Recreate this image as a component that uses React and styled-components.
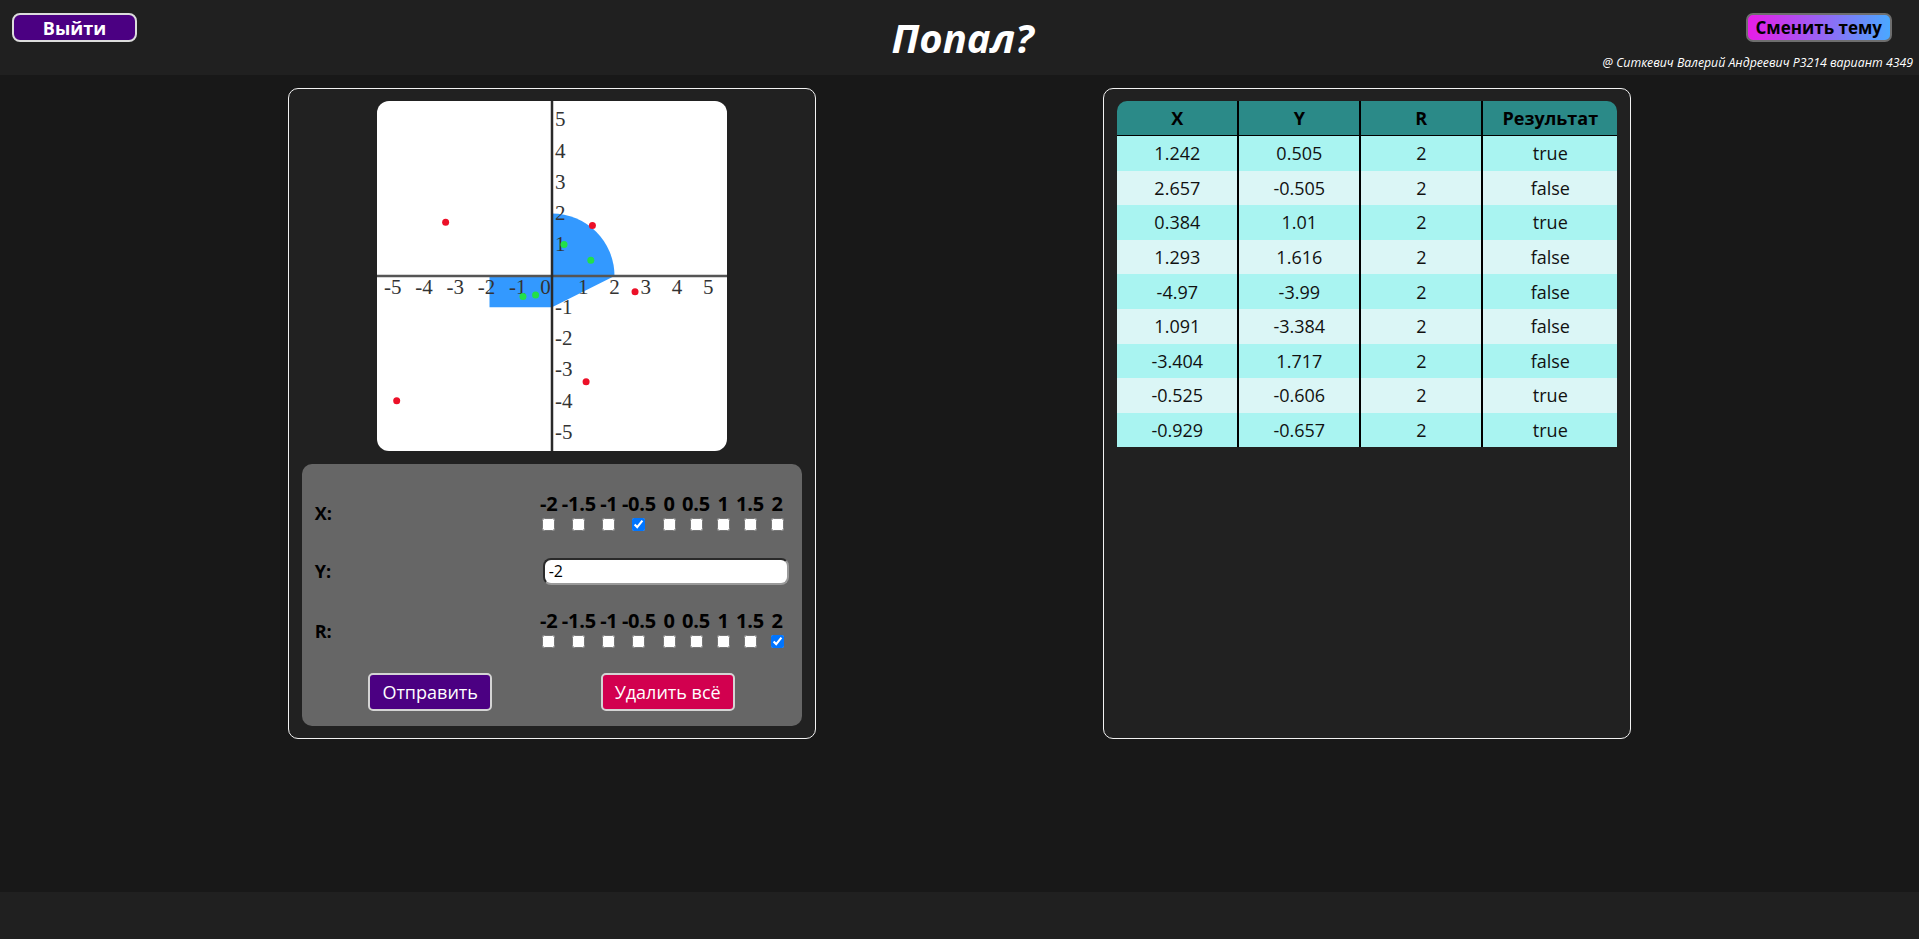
import React from "react";
import styled, { createGlobalStyle } from "styled-components";

const GlobalStyle = createGlobalStyle`
  html, body { margin: 0; padding: 0; height: 100%; }
  body {
    background: #181818;
    font-family: "Open Sans", "Noto Sans", sans-serif;
    color: #fff;
    overflow: hidden;
  }
  #root { height: 100%; }
  * { box-sizing: border-box; }
`;

const Page = styled.div`
  height: 100vh;
  display: flex;
  flex-direction: column;
`;

const Header = styled.header`
  flex: 0 0 75px;
  background: #202020;
  display: grid;
  grid-template-columns: 1fr auto 1fr;
  align-items: start;
  padding: 0 6px 0 12px;
`;

const HeaderLeft = styled.div`
  display: flex;
  padding-top: 13px;
`;

const HeaderRight = styled.div`
  display: flex;
  flex-direction: column;
  align-items: flex-end;
  padding-top: 13px;
`;

const LogoutButton = styled.button`
  width: 125px;
  height: 29px;
  background: #4b0082;
  color: #fff;
  border: 2px solid #dcdcdc;
  border-radius: 8px;
  font-family: inherit;
  font-weight: 700;
  font-size: 18px;
  line-height: 1;
  padding: 0;
`;

const Title = styled.h1`
  margin: 18px 0 0;
  font-size: 40px;
  line-height: 40px;
  font-weight: 700;
  font-style: italic;
  color: #fff;
`;

const ThemeButton = styled.button`
  height: 29px;
  padding: 0 8px;
  margin-right: 21px;
  background: linear-gradient(90deg, #e81ce8, #4aa8ff);
  color: #000;
  border: 2px solid #6e6e6e;
  border-radius: 7px;
  font-family: inherit;
  font-weight: 700;
  font-size: 17px;
  line-height: 1;
`;

const Credits = styled.div`
  margin-top: 13px;
  font-size: 12.3px;
  line-height: 16px;
  font-style: italic;
  color: #fff;
  white-space: nowrap;
`;

const Main = styled.main`
  flex: 1;
  display: flex;
  justify-content: space-evenly;
  align-items: flex-start;
  padding-top: 13px;
`;

const Panel = styled.section`
  width: 528px;
  height: 651px;
  border: 1px solid #f2f2f2;
  border-radius: 10px;
  background: #212121;
  padding: 12px 13px;
  display: flex;
  flex-direction: column;
  align-items: center;
`;

const GraphSvg = styled.svg`
  display: block;
  width: 350px;
  height: 350px;
  background: #fff;
  border-radius: 12px;
  flex: none;
`;

const Form = styled.form`
  width: 100%;
  height: 262px;
  margin-top: 13px;
  background: #666666;
  border-radius: 10px;
  padding: 20px 12px 4px 13px;
  display: grid;
  grid-template-columns: 224px 1fr;
  grid-template-rows: 58px 58px 61px 61px;
  color: #000;
`;

const FieldLabel = styled.div`
  display: flex;
  align-items: center;
  font-weight: 700;
  font-size: 18px;
`;

const Cell = styled.div`
  display: flex;
  align-items: center;
  justify-content: ${(p) => (p.$center ? "center" : "flex-start")};
  padding-left: ${(p) => (p.$center ? "7px" : "0")};
`;

const Options = styled.div`
  display: flex;
  gap: 3px;
`;

const Option = styled.label`
  min-width: 20px;
  display: flex;
  flex-direction: column;
  align-items: center;
  font-weight: 700;
  font-size: 20px;
  line-height: 22px;
  letter-spacing: -0.2px;
  white-space: nowrap;
`;

const Check = styled.input`
  width: 13px;
  height: 13px;
  margin: 3px 0;
`;

const TextInput = styled.input`
  width: 246px;
  height: 27px;
  margin-left: 4px;
  border: 2px solid;
  border-color: #2a2a2a #9a9a9a #9a9a9a #2a2a2a;
  border-radius: 8px;
  background: #fff;
  padding: 0 4px;
  font-family: inherit;
  font-size: 16px;
  color: #000;
  outline: none;
`;

const ActionButton = styled.button`
  height: 38px;
  padding: 0 12px;
  background: ${(p) => p.$bg};
  color: #fff;
  border: 2px solid #d4d4d4;
  border-radius: 5px;
  font-family: inherit;
  font-size: 18px;
  line-height: 1;
`;

const Table = styled.table`
  width: 500px;
  border-collapse: separate;
  border-spacing: 0;
  table-layout: fixed;
  color: #111;
  font-size: 18px;
`;

const Th = styled.th`
  height: 35px;
  padding: 0;
  background: #2b8a88;
  color: #000;
  font-weight: 700;
  border-bottom: 1px solid #000;
  border-left: ${(p) => (p.$first ? "none" : "2px solid #000")};
  &:first-child { border-top-left-radius: 10px; }
  &:last-child { border-top-right-radius: 10px; }
`;

const Tr = styled.tr`
  background: ${(p) => (p.$odd ? "#a9f4f1" : "#dbf6f6")};
`;

const Td = styled.td`
  height: 34.6px;
  padding: 0;
  text-align: center;
  vertical-align: middle;
  border-left: ${(p) => (p.$first ? "none" : "2px solid #000")};
`;

const Footer = styled.footer`
  flex: 0 0 47px;
  background: #202020;
`;

const VALUES = ["-2", "-1.5", "-1", "-0.5", "0", "0.5", "1", "1.5", "2"];

const ROWS = [
  ["1.242", "0.505", "2", "true"],
  ["2.657", "-0.505", "2", "false"],
  ["0.384", "1.01", "2", "true"],
  ["1.293", "1.616", "2", "false"],
  ["-4.97", "-3.99", "2", "false"],
  ["1.091", "-3.384", "2", "false"],
  ["-3.404", "1.717", "2", "false"],
  ["-0.525", "-0.606", "2", "true"],
  ["-0.929", "-0.657", "2", "true"],
];

const U = 31.25;
const C = 175;
const px = (v) => C + v * U;
const py = (v) => C - v * U;
const TICKS = [-5, -4, -3, -2, -1, 1, 2, 3, 4, 5];
const BLUE = "#3399ff";

function Graph() {
  return (
    <GraphSvg viewBox="0 0 350 350">
      <path
        d={`M${C},${C} L${C},${py(2)} A${2 * U},${2 * U} 0 0 1 ${px(2)},${C} Z`}
        fill={BLUE}
      />
      <rect x={px(-2)} y={C} width={2 * U} height={U} fill={BLUE} />
      <polygon points={`${C},${C} ${px(2)},${C} ${C},${py(-1)}`} fill={BLUE} />
      <line x1="0" y1={C} x2="350" y2={C} stroke="#555" strokeWidth="2.5" />
      <line x1={C} y1="0" x2={C} y2="350" stroke="#2a2a2a" strokeWidth="2.5" />
      <g fontFamily='"Liberation Serif", "DejaVu Serif", serif' fontSize="21" fill="#333">
        {TICKS.map((k) => (
          <text key={`x${k}`} x={px(k) - (k < 0 ? 3 : 0)} y={193} textAnchor="middle">
            {k}
          </text>
        ))}
        <text x={168.5} y={193} textAnchor="middle">0</text>
        {TICKS.map((k) => (
          <text key={`y${k}`} x={178} y={py(k) + 6.5} textAnchor="start">
            {k}
          </text>
        ))}
      </g>
      {ROWS.map(([x, y, , res], i) => (
        <circle
          key={i}
          cx={px(parseFloat(x))}
          cy={py(parseFloat(y))}
          r="3.5"
          fill={res === "true" ? "#22e04a" : "#ec1028"}
        />
      ))}
    </GraphSvg>
  );
}

function OptionGroup({ checked }) {
  return (
    <Options>
      {VALUES.map((v) => (
        <Option key={v}>
          {v}
          <Check type="checkbox" defaultChecked={v === checked} />
        </Option>
      ))}
    </Options>
  );
}

export default function App() {
  return (
    <Page>
      <GlobalStyle />
      <Header>
        <HeaderLeft>
          <LogoutButton>Выйти</LogoutButton>
        </HeaderLeft>
        <Title>Попал?</Title>
        <HeaderRight>
          <ThemeButton>Сменить тему</ThemeButton>
          <Credits>@ Ситкевич Валерий Андреевич P3214 вариант 4349</Credits>
        </HeaderRight>
      </Header>
      <Main>
        <Panel>
          <Graph />
          <Form onSubmit={(e) => e.preventDefault()}>
            <FieldLabel>X:</FieldLabel>
            <Cell>
              <OptionGroup checked="-0.5" />
            </Cell>
            <FieldLabel>Y:</FieldLabel>
            <Cell>
              <TextInput type="text" defaultValue="-2" />
            </Cell>
            <FieldLabel>R:</FieldLabel>
            <Cell>
              <OptionGroup checked="2" />
            </Cell>
            <Cell $center>
              <ActionButton type="submit" $bg="#4b0082">Отправить</ActionButton>
            </Cell>
            <Cell $center>
              <ActionButton type="button" $bg="#d2004f">Удалить всё</ActionButton>
            </Cell>
          </Form>
        </Panel>
        <Panel>
          <Table>
            <colgroup>
              <col style={{ width: "120px" }} />
              <col style={{ width: "122px" }} />
              <col style={{ width: "122px" }} />
              <col style={{ width: "136px" }} />
            </colgroup>
            <thead>
              <tr>
                <Th $first>X</Th>
                <Th>Y</Th>
                <Th>R</Th>
                <Th>Результат</Th>
              </tr>
            </thead>
            <tbody>
              {ROWS.map((row, i) => (
                <Tr key={i} $odd={i % 2 === 0}>
                  {row.map((c, j) => (
                    <Td key={j} $first={j === 0}>
                      {c}
                    </Td>
                  ))}
                </Tr>
              ))}
            </tbody>
          </Table>
        </Panel>
      </Main>
      <Footer />
    </Page>
  );
}
